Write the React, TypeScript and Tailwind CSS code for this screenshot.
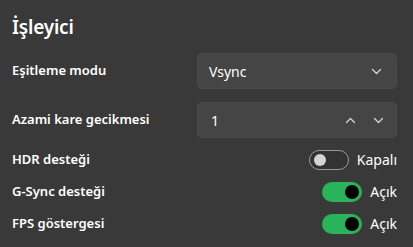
import React from "react";

const font = { fontFamily: '"Noto Sans", "Open Sans", sans-serif' };

function Chevron({ up = false }: { up?: boolean }) {
  return (
    <svg width="11" height="7" viewBox="0 0 11 7" fill="none">
      <path
        d={up ? "M1.5 5.5 L5.5 1.5 L9.5 5.5" : "M1.5 1.5 L5.5 5.5 L9.5 1.5"}
        stroke="#d8d8d8"
        strokeWidth="1.2"
        strokeLinecap="round"
        strokeLinejoin="round"
      />
    </svg>
  );
}

function Toggle({ on, label }: { on: boolean; label: string }) {
  return (
    <div className="flex items-center gap-2">
      {on ? (
        <div className="w-10 h-5 rounded-full bg-[#2ab35b] flex items-center justify-end pr-[3px]">
          <div className="w-[14px] h-[14px] rounded-full bg-black" />
        </div>
      ) : (
        <div className="w-10 h-5 rounded-full border border-[#9a9a9a] bg-[#333333] flex items-center pl-[4px]">
          <div className="w-3 h-3 rounded-full bg-[#d4d4d4]" />
        </div>
      )}
      <span className="text-[14px] text-white leading-none">{label}</span>
    </div>
  );
}

export default function App() {
  return (
    <div className="w-[413px] h-[247px] bg-[#393939] text-white overflow-hidden" style={font}>
      <div className="pl-3 pr-4 pt-[13px]">
        <h1 className="text-[19px] font-semibold leading-[28px] tracking-[-0.2px]">İşleyici</h1>
        <div className="mt-[12px] flex items-center justify-between h-9">
          <span className="text-[13px] font-semibold">Eşitleme modu</span>
          <div className="w-[200px] h-9 rounded-[5px] bg-[#454545] border border-[#4b4b4b] flex items-center justify-between pl-[11px] pr-[14px]">
            <span className="text-[14px]">Vsync</span>
            <Chevron />
          </div>
        </div>
        <div className="mt-[13px] flex items-center justify-between h-9">
          <span className="text-[13px] font-semibold">Azami kare gecikmesi</span>
          <div className="w-[200px] h-9 rounded-[5px] bg-[#454545] border border-[#4b4b4b] flex items-center justify-between pl-[13px] pr-[12px]">
            <span className="text-[14px]">1</span>
            <div className="flex items-center gap-[17px]">
              <Chevron up />
              <Chevron />
            </div>
          </div>
        </div>
        <div className="mt-[12px] flex items-center justify-between h-5">
          <span className="text-[13px] font-semibold">HDR desteği</span>
          <Toggle on={false} label="Kapalı" />
        </div>
        <div className="mt-[12px] flex items-center justify-between h-5">
          <span className="text-[13px] font-semibold">G-Sync desteği</span>
          <Toggle on label="Açık" />
        </div>
        <div className="mt-[12px] flex items-center justify-between h-5">
          <span className="text-[13px] font-semibold">FPS göstergesi</span>
          <Toggle on label="Açık" />
        </div>
      </div>
    </div>
  );
}
